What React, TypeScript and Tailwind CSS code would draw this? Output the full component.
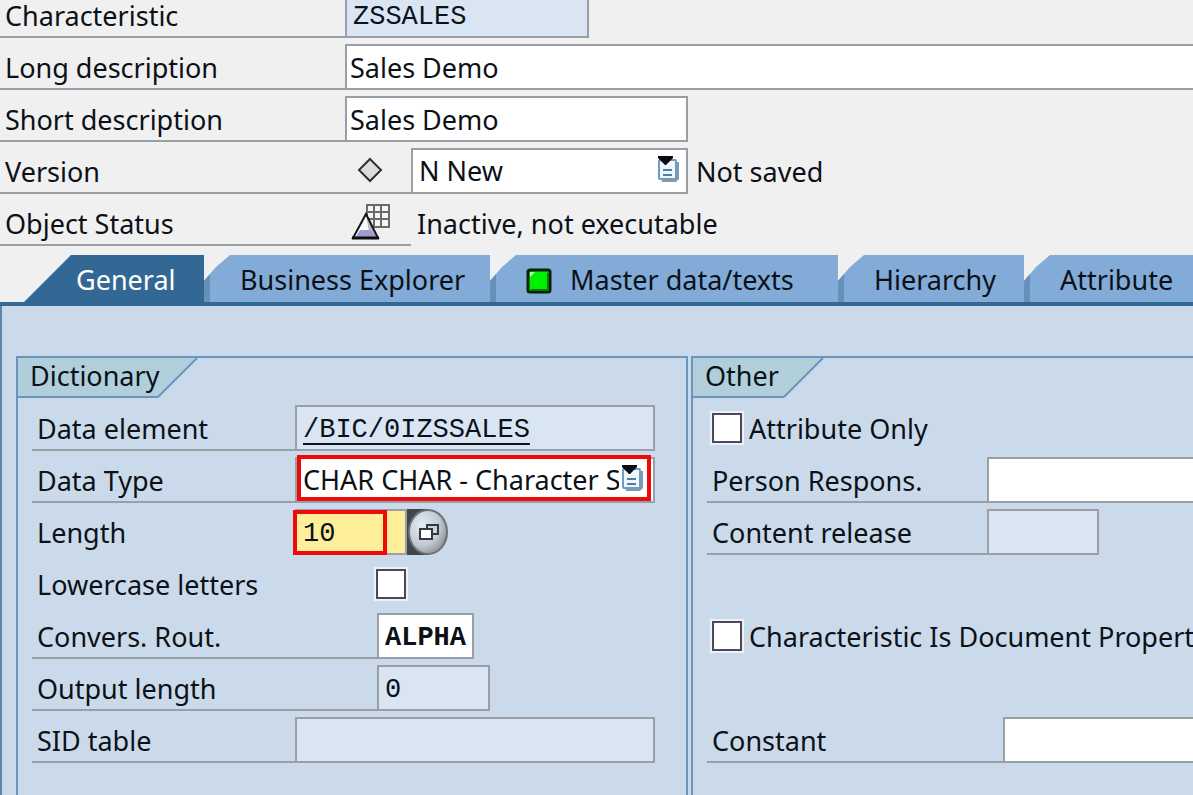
import type { ReactNode } from "react";
import { clsx } from "clsx";

const line = "border-[#9a9fa5]";
const mono = "pt-[3px] font-['Liberation_Mono',monospace]";

/* One form line: underlined label on the left, field on the right */
function Row({
  label,
  id,
  labelWidth,
  underline = true,
  icon,
  children,
}: {
  label: string;
  id?: string;
  labelWidth: string;
  underline?: boolean;
  icon?: ReactNode;
  children?: ReactNode;
}) {
  return (
    <div className="flex items-end pt-[6px]">
      <div
        className={clsx(
          "flex h-[46px] shrink-0 items-center justify-between border-b-2 pl-[5px] whitespace-nowrap",
          underline ? line : "border-transparent",
          labelWidth
        )}
      >
        {id ? (
          <label htmlFor={id} className="pt-1">
            {label}
          </label>
        ) : (
          <span className="pt-1">{label}</span>
        )}
        {icon}
      </div>
      {children}
    </div>
  );
}

function Field({
  id,
  value = "",
  readOnly,
  className,
}: {
  id: string;
  value?: string;
  readOnly?: boolean;
  className?: string;
}) {
  return (
    <input
      id={id}
      type="text"
      defaultValue={value}
      readOnly={readOnly}
      className={clsx(
        "h-[46px] min-w-0 rounded-none border-2 outline-none",
        line,
        readOnly ? "bg-[#d9e5f3]" : "bg-white",
        className
      )}
    />
  );
}

function Check({ id }: { id: string }) {
  return (
    <input
      id={id}
      type="checkbox"
      className="m-px size-[30px] shrink-0 appearance-none border-2 border-[#4b4858] bg-white outline-2 outline-[#eef1f8] checked:bg-[#336895]"
    />
  );
}

function ListIcon() {
  return (
    <svg width="24" height="28" viewBox="0 0 24 28" className="pointer-events-none">
      <path d="M4 26h15l3-3V6h-3z" fill="#8798a8" />
      <rect x="2" y="4" width="17" height="19" rx="1" fill="#eef6fc" stroke="#6f9cc0" strokeWidth="2" />
      <path d="M6 14h9M6 19h9" stroke="#4d7ea8" strokeWidth="2" />
      <path d="M1 0h15v2L9 9H8L1 2z" fill="#0a0a12" />
    </svg>
  );
}

function DiamondIcon() {
  return (
    <svg width="26" height="26" viewBox="0 0 26 26">
      <path d="M13 2 24 13 13 24 2 13z" fill="#dcdcdc" stroke="#303030" strokeWidth="2" />
    </svg>
  );
}

function InactiveIcon() {
  return (
    <svg width="40" height="38" viewBox="0 0 40 38">
      <rect x="16" y="2" width="22" height="22" fill="#f4f4f4" />
      <path d="M16 2h22v22H16zM23 2v22M30 2v22M16 9h22M16 16h22" fill="none" stroke="#6a6a6a" strokeWidth="2" />
      <path d="M15 11 27 35H2z" fill="#fafafa" />
      <path d="M15 11 27 35H19z" fill="#b9b9c4" />
      <path d="M9 27h11l6 8H4z" fill="#9d9dd0" />
      <path d="M15 11 27 35H2z" fill="none" stroke="#14141c" strokeWidth="2" />
      <path d="M1 35h27" stroke="#0d0d14" strokeWidth="3" />
    </svg>
  );
}

function LedIcon() {
  return (
    <svg width="26" height="26" viewBox="0 0 26 26" className="mt-[3px]">
      <rect x="2" y="2" width="22" height="22" rx="2" fill="#00f000" stroke="#06200a" strokeWidth="3" />
      <path d="M5 22h17V5" fill="none" stroke="#0a7a10" strokeWidth="2" />
      <path d="M4 4h5L4 9z" fill="#b8ffb8" />
    </svg>
  );
}

function MatchcodeIcon() {
  return (
    <svg width="42" height="46" viewBox="0 0 42 46">
      <defs>
        <radialGradient id="ball" cx="0.35" cy="0.35" r="0.75">
          <stop offset="0" stopColor="#e2edf8" />
          <stop offset="0.6" stopColor="#c2cbd4" />
          <stop offset="1" stopColor="#85898c" />
        </radialGradient>
      </defs>
      <path d="M0 0h22v46H0z" fill="#42464a" />
      <ellipse cx="21" cy="23" rx="19" ry="22" fill="url(#ball)" stroke="#6c7276" strokeWidth="2" />
      <path d="M20 16h11v9H20z" fill="#c9d4df" stroke="#35383c" strokeWidth="2" />
      <path d="M13 20h12v10H13z" fill="#fff" stroke="#35383c" strokeWidth="2" />
    </svg>
  );
}

function Tab({ label, width, icon }: { label: string; width: string; icon?: ReactNode }) {
  return (
    <button
      type="button"
      role="tab"
      aria-selected={false}
      className={clsx(
        "flex shrink-0 items-center gap-[18px] border-l-6 border-[#6690b8] bg-[#83abd8] pt-[2px] pl-[30px] whitespace-nowrap [clip-path:polygon(0_26px,12px_12px,26px_0,100%_0,100%_100%,0_100%)]",
        width
      )}
    >
      {icon}
      {label}
    </button>
  );
}

function Group({ title, titleWidth, className, children }: { title: string; titleWidth: string; className?: string; children: ReactNode }) {
  return (
    <section className={clsx("min-w-0 border-t-2 border-l-2 border-[#6c95bd]", className)}>
      <div className="flex">
        <h2 className={clsx("relative h-10 border-b-2 border-[#6c95bd] bg-[#b0cfdb] pl-3 leading-9", titleWidth)}>{title}</h2>
        <svg width="40" height="40" viewBox="0 0 40 40">
          <path d="M0 0h39L0 39z" fill="#b0cfdb" />
          <path d="M39 0 0 39" stroke="#6c95bd" strokeWidth="2" />
        </svg>
      </div>
      <div className="pt-px pl-[14px]">{children}</div>
    </section>
  );
}

export default function App() {
  return (
    <main className="flex min-h-screen flex-col overflow-hidden bg-[#f0f0f0] font-['Noto_Sans',sans-serif] text-[27px] leading-9 text-[#0c1118]">
      <div className="-mt-[14px]">
        <Row label="Characteristic" id="characteristic" labelWidth="w-[345px]">
          <Field id="characteristic" value="ZSSALES" readOnly className={clsx("w-[244px] pl-[6px]", mono)} />
        </Row>
        <Row label="Long description" id="long" labelWidth="w-[345px]">
          <Field id="long" value="Sales Demo" className="flex-1 border-r-0 pl-[3px]" />
        </Row>
        <Row label="Short description" id="short" labelWidth="w-[345px]">
          <Field id="short" value="Sales Demo" className="w-[343px] pl-[3px]" />
        </Row>
        <Row label="Version" id="version" labelWidth="w-[411px] pr-[28px]" icon={<DiamondIcon />}>
          <div className="relative w-[277px]">
            <select id="version" className={clsx("block h-[46px] w-full appearance-none border-2 bg-white pl-[6px] outline-none", line)}>
              <option>N New</option>
            </select>
            <div className="pointer-events-none absolute top-2 right-[7px]">
              <ListIcon />
            </div>
          </div>
          <span className="pb-1 pl-2">Not saved</span>
        </Row>
        <Row label="Object Status" labelWidth="w-[411px] pr-5" icon={<InactiveIcon />}>
          <span className="pb-1 pl-[6px]">Inactive, not executable</span>
        </Row>
      </div>

      <div role="tablist" className="mt-[9px] flex h-[51px] border-b-4 border-[#336895]">
        <button
          type="button"
          role="tab"
          aria-selected
          className="ml-6 w-[180px] shrink-0 bg-[#336895] pt-[2px] pl-[52px] text-left text-white [clip-path:polygon(0_100%,47px_0,100%_0,100%_100%)]"
        >
          General
        </button>
        <Tab label="Business Explorer" width="w-[286px]" />
        <Tab label="Master data/texts" width="w-[348px]" icon={<LedIcon />} />
        <Tab label="Hierarchy" width="w-[186px]" />
        <Tab label="Attribute" width="w-[200px]" />
      </div>

      <div className="grid flex-1 grid-cols-[672fr_502fr] gap-[3px] border-l-2 border-[#5d86ad] bg-[#cbdaea] pt-[50px] pl-[14px]">
        <Group title="Dictionary" titleWidth="w-[140px]" className="border-r-2">
          <Row label="Data element" id="element" labelWidth="w-[263px]">
            <Field
              id="element"
              value="/BIC/0IZSSALES"
              readOnly
              className={clsx("w-[360px] pl-[6px] leading-[39px] underline decoration-2 underline-offset-6", mono)}
            />
          </Row>
          <Row label="Data Type" id="type" labelWidth="w-[263px]">
            <div className="relative">
              <select id="type" className={clsx("block h-[46px] w-[360px] appearance-none border-2 bg-white pr-[34px] pl-[6px] outline-none", line)}>
                <option>CHAR CHAR - Character String</option>
              </select>
              <div className="pointer-events-none absolute top-2 right-[10px]">
                <ListIcon />
              </div>
              <div className="pointer-events-none absolute -top-[2px] left-[2px] h-[46px] w-[354px] border-4 border-[#ee0a0a]" />
            </div>
          </Row>
          <Row label="Length" id="length" labelWidth="w-[263px]" underline={false}>
            <div className="relative flex">
              <Field id="length" value="10" className={clsx("w-[112px] bg-[#ffee99]! pl-[6px]", mono)} />
              <button type="button" aria-label="Value help">
                <MatchcodeIcon />
              </button>
              <div className="pointer-events-none absolute -left-[2px] top-px h-[45px] w-[94px] border-4 border-[#ee0a0a]" />
            </div>
          </Row>
          <Row label="Lowercase letters" id="lower" labelWidth="w-[343px]" underline={false}>
            <div className="flex h-[46px] items-center">
              <Check id="lower" />
            </div>
          </Row>
          <Row label="Convers. Rout." id="rout" labelWidth="w-[345px]">
            <Field id="rout" value="ALPHA" className={clsx("w-[97px] pl-[6px] font-bold", mono)} />
          </Row>
          <Row label="Output length" id="output" labelWidth="w-[345px]">
            <Field id="output" value="0" readOnly className={clsx("w-[113px] pl-[6px]", mono)} />
          </Row>
          <Row label="SID table" id="sid" labelWidth="w-[263px]">
            <Field id="sid" readOnly className="w-[360px]" />
          </Row>
        </Group>

        <Group title="Other" titleWidth="w-[91px]">
          <div className="flex h-[52px] items-center gap-[6px] pt-[6px] pl-1">
            <Check id="attronly" />
            <label htmlFor="attronly" className="pt-[2px]">
              Attribute Only
            </label>
          </div>
          <Row label="Person Respons." id="person" labelWidth="w-[280px]">
            <Field id="person" className="flex-1 border-r-0" />
          </Row>
          <Row label="Content release" id="release" labelWidth="w-[280px]">
            <Field id="release" readOnly className="w-[112px]" />
          </Row>
          <div className="my-[52px] flex h-[52px] items-center gap-[6px] pt-[6px] pl-1">
            <Check id="docprop" />
            <label htmlFor="docprop" className="pt-[2px] whitespace-nowrap">
              Characteristic Is Document Property
            </label>
          </div>
          <Row label="Constant" id="constant" labelWidth="w-[296px]">
            <Field id="constant" className="flex-1 border-r-0" />
          </Row>
        </Group>
      </div>
    </main>
  );
}
